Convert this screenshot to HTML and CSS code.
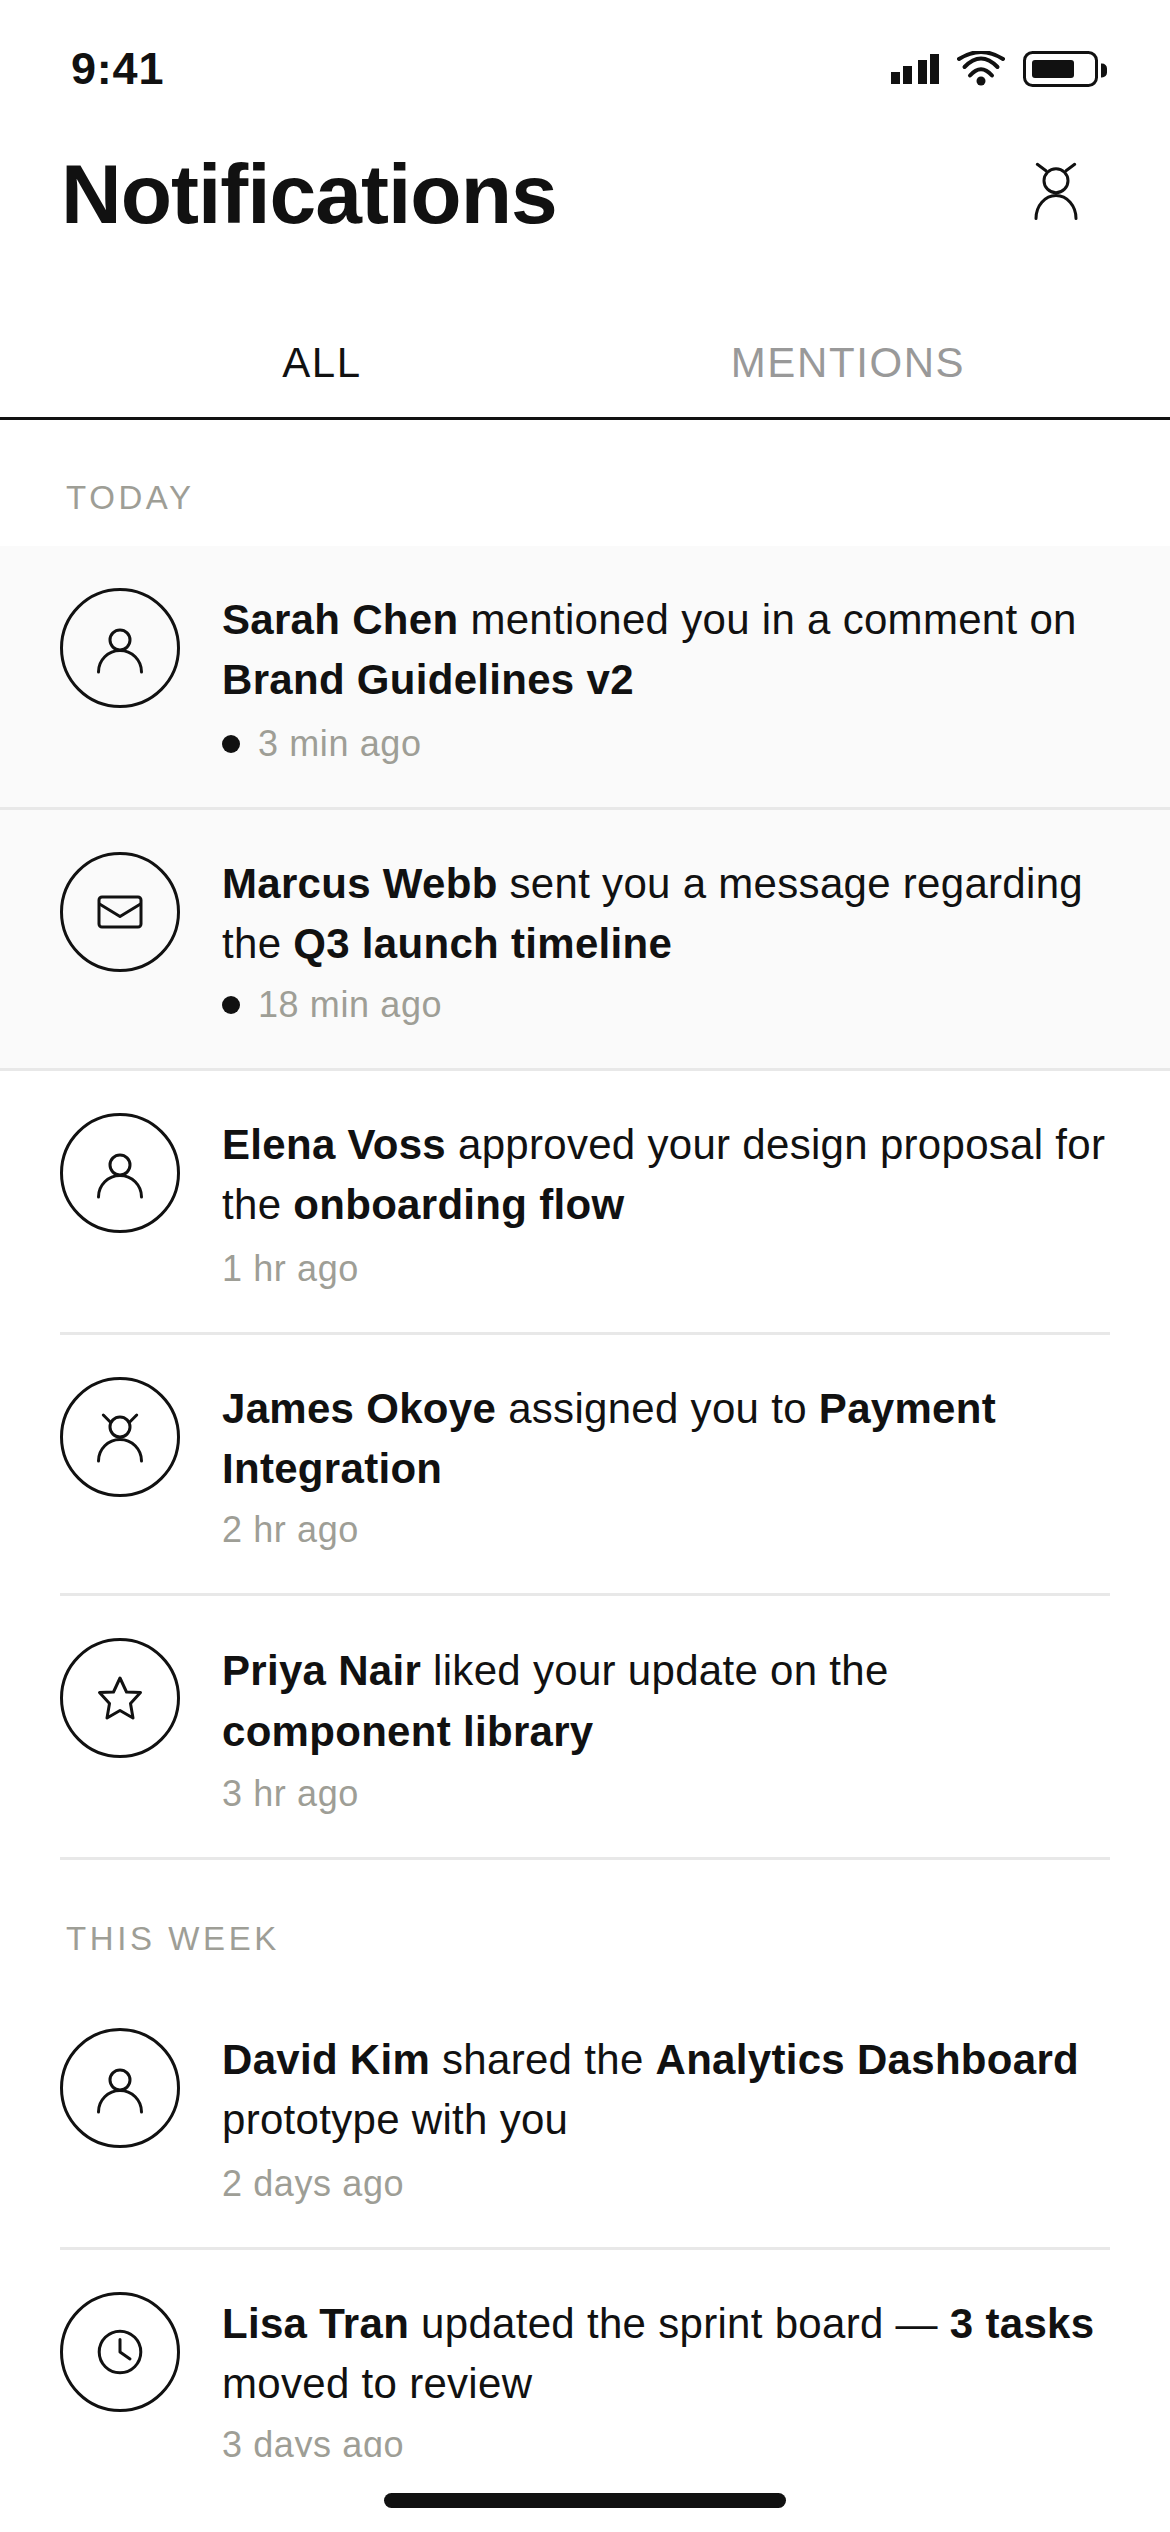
FILE: index.html
```html
<!DOCTYPE html>
<html lang="en">
<head>
<meta charset="utf-8">
<title>Notifications</title>
<link rel="stylesheet" href="styles.css">
</head>
<body>
<div class="screen">
  <div class="status">
    <span class="clock">9:41</span>
    <div class="status-icons">
      <svg class="sig" width="48" height="30" viewBox="0 0 48 30"><rect x="0" y="18" width="9" height="12"/><rect x="12" y="12" width="9" height="18"/><rect x="27" y="6" width="9" height="24"/><rect x="39" y="0" width="9" height="30"/></svg>
      <svg class="wifi" width="48" height="35" viewBox="0 0 48 35" fill="none" stroke="#111" stroke-width="4" stroke-linecap="round"><path d="M2 8Q24 -6 46 8"/><path d="M7.500 16Q24 -1 40.500 16"/><path d="M13 24.500Q24 12 35 24.500"/><circle cx="24" cy="30" r="4.500" fill="#111" stroke="none"/></svg>
      <svg class="batt" width="84" height="36" viewBox="0 0 84 36"><rect x="1.500" y="1.500" width="72" height="33" rx="8" fill="none" stroke="#111" stroke-width="3"/><rect x="9" y="9" width="42" height="18" rx="3" fill="#111"/><path d="M78 12.500h1a5 5 0 0 1 5 5v4a5 5 0 0 1-5 5h-1z" fill="#111"/></svg>
    </div>
  </div>
  <div class="head">
    <h1>Notifications</h1>
    <svg class="i-top" width="60" height="72" viewBox="0 0 60 72" fill="none" stroke="#111" stroke-width="3" stroke-linecap="round"><circle cx="30" cy="24.700" r="12"/><path d="M10 62.500A20 23 0 0 1 50 62.500"/><path d="M11.300 8.300L20 14.700M48.700 8.300L40 14.700"/></svg>
  </div>
  <div class="tabs"><span class="tab on">ALL</span><span class="tab">MENTIONS</span></div>
  <div class="list">
    <div class="label label-today">TODAY</div>
    <div class="row unread tall">
      <div class="av"><svg class="ico" viewBox="0 0 60 60"><circle cx="30" cy="22" r="10"/><path d="M8.500 54a21.500 21.500 0 0 1 43 0"/></svg></div>
      <div class="body"><p><b>Sarah Chen</b> mentioned you in a comment on <b>Brand Guidelines v2</b></p><div class="time"><i class="dot"></i>3 min ago</div></div>
    </div>
    <div class="row unread">
      <div class="av"><svg class="ico" viewBox="0 0 60 60"><rect x="9" y="15" width="42" height="30" rx="3"/><path d="M9.500 22L30 34.500L50.500 22"/></svg></div>
      <div class="body"><p><b>Marcus Webb</b> sent you a message regarding the <b>Q3 launch timeline</b></p><div class="time"><i class="dot"></i>18 min ago</div></div>
    </div>
    <div class="row inset tall">
      <div class="av"><svg class="ico" viewBox="0 0 60 60"><circle cx="30" cy="22" r="10"/><path d="M8.500 54a21.500 21.500 0 0 1 43 0"/></svg></div>
      <div class="body"><p><b>Elena Voss</b> approved your design proposal for the <b>onboarding flow</b></p><div class="time">1 hr ago</div></div>
    </div>
    <div class="row inset">
      <div class="av"><svg class="ico" viewBox="0 0 60 60"><circle cx="30" cy="20" r="10"/><path d="M8.500 54a21.500 21.500 0 0 1 43 0"/><path d="M13.300 8L20 14.700M46.700 8L40 14.700"/></svg></div>
      <div class="body"><p><b>James Okoye</b> assigned you to <b>Payment Integration</b></p><div class="time">2 hr ago</div></div>
    </div>
    <div class="row inset tall">
      <div class="av"><svg class="ico" viewBox="0 0 60 60"><path d="M30 10L36.500 24L50.500 24.500L40.500 35.500L43 50L30 42.500L17 50L19.500 35.500L9.500 24.500L23.500 24Z"/></svg></div>
      <div class="body"><p class="loose"><b>Priya Nair</b> liked your update on the <b>component library</b></p><div class="time short">3 hr ago</div></div>
    </div>
    <div class="label label-week">THIS WEEK</div>
    <div class="row inset tall">
      <div class="av"><svg class="ico" viewBox="0 0 60 60"><circle cx="30" cy="22" r="10"/><path d="M8.500 54a21.500 21.500 0 0 1 43 0"/></svg></div>
      <div class="body"><p><b>David Kim</b> shared the <b>Analytics Dashboard</b> prototype with you</p><div class="time">2 days ago</div></div>
    </div>
    <div class="row inset">
      <div class="av"><svg class="ico" viewBox="0 0 60 60"><circle cx="30" cy="30" r="20.800"/><path d="M30 17.500V30L40 37"/></svg></div>
      <div class="body"><p><b>Lisa Tran</b> updated the sprint board — <b>3 tasks</b> moved to review</p><div class="time">3 days ago</div></div>
    </div>
  </div>
  <div class="home"><span class="bar"></span></div>
</div>
</body>
</html>
```
FILE: styles.css
```css
* { box-sizing: border-box; }
html, body { margin: 0; padding: 0; background: #fff; }
.screen {
  width: 1170px; height: 2532px; overflow: hidden;
  display: flex; flex-direction: column;
  font-family: "Liberation Sans", Arial, sans-serif; color: #111;
}
.status { height: 132px; padding: 48px 63px 0 71px; display: flex; justify-content: space-between; align-items: flex-start; flex: none; }
.clock { font-size: 45px; font-weight: 700; line-height: 40px; letter-spacing: 0.800px; margin-top: 1px; }
.status-icons { display: flex; align-items: flex-start; gap: 18px; padding-top: 3px; }
.sig { fill: #111; margin-top: 3px; }
.head { height: 126px; padding: 0 84px 0 61px; display: flex; justify-content: space-between; align-items: center; flex: none; }
.head h1 { margin: 0 0 3px; font-size: 84px; line-height: 100px; font-weight: 700; letter-spacing: -1px; }
.i-top { margin-bottom: 6px; }
.tabs { height: 162px; display: flex; border-bottom: 3px solid #111; flex: none; padding: 80px 59px 0; }
.tab { flex: 1; text-align: center; font-size: 42px; line-height: 50px; letter-spacing: 1.600px; color: #999; }
.tab.on { color: #111; }
.list { height: 2037px; overflow: hidden; flex: none; }
.label { font-size: 33px; line-height: 40px; letter-spacing: 3.600px; color: #9e9e96; padding-left: 66px; }
.label-today { padding-top: 58px; height: 126px; }
.label-week { padding-top: 59px; height: 126px; }
.row { display: flex; gap: 42px; padding: 42px 60px 0; height: 261px; border-bottom: 3px solid #e8e8e8; }
.row.tall { height: 264px; }
.row.unread { background: #fafafa; }
.row.inset { border-bottom: 0; position: relative; }
.row.inset::after { content: ""; position: absolute; left: 60px; right: 60px; bottom: 0; height: 3px; background: #e8e8e8; }
.av { width: 120px; height: 120px; border: 3px solid #111; border-radius: 50%; display: flex; align-items: center; justify-content: center; flex: none; }
.ico { width: 60px; height: 60px; fill: none; stroke: #111; stroke-width: 3; stroke-linecap: round; stroke-linejoin: round; }
.body { flex: 1; min-width: 0; }
.body p { margin: 2px 0 0; font-size: 42px; line-height: 60px; letter-spacing: 0.300px; color: #111; }
.body p.loose { line-height: 61px; }
.time { font-size: 36px; line-height: 42px; letter-spacing: 0.600px; margin-top: 10px; color: #9e9e96; display: flex; align-items: center; }
.tall .time { margin-top: 13px; }
.tall .time.short { margin-top: 11px; }
.dot { width: 18px; height: 18px; border-radius: 50%; background: #111; margin-right: 18px; flex: none; }
.home { flex: none; height: 75px; display: flex; justify-content: center; padding-top: 36px; }
.bar { width: 402px; height: 15px; border-radius: 8px; background: #111; }
```
